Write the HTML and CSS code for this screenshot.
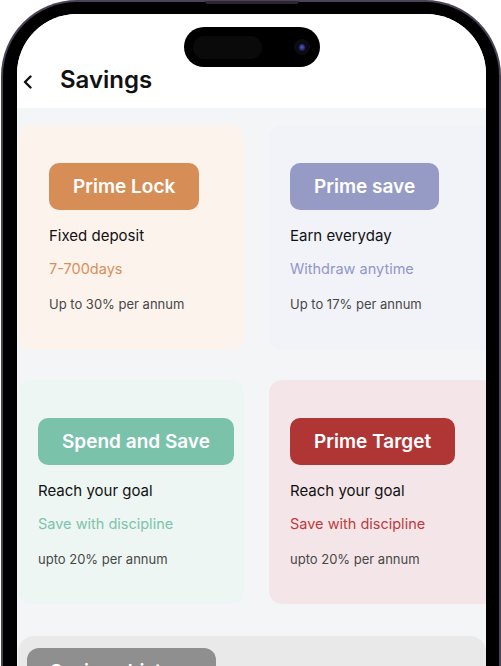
FILE: index.html
```html
<!DOCTYPE html>
<html>
<head>
<meta charset="utf-8">
<link rel="stylesheet" href="styles.css">
</head>
<body>
<div class="phone">
  <div class="speaker"></div>
  <div class="screen">
    <div class="island">
      <div class="island-sensor"></div>
      <div class="island-camera"><div class="lens"></div></div>
    </div>
    <header class="topbar">
      <svg class="back" width="12" height="14" viewBox="0 0 12 14"><path d="M8.5 1.5 L3 7 L8.5 12.5" fill="none" stroke="#111" stroke-width="2.4" stroke-linecap="round" stroke-linejoin="round"/></svg>
      <h1 class="title">Savings</h1>
    </header>
    <main class="content">
      <div class="grid">
        <div class="card card-lock">
          <div class="pill">Prime Lock</div>
          <p class="line main">Fixed deposit</p>
          <p class="line accent">7-700days</p>
          <p class="line rate">Up to 30% per annum</p>
        </div>
        <div class="card card-save">
          <div class="pill">Prime save</div>
          <p class="line main">Earn everyday</p>
          <p class="line accent">Withdraw anytime</p>
          <p class="line rate">Up to 17% per annum</p>
        </div>
        <div class="card card-spend">
          <div class="pill">Spend and Save</div>
          <p class="line main">Reach your goal</p>
          <p class="line accent">Save with discipline</p>
          <p class="line rate">upto 20% per annum</p>
        </div>
        <div class="card card-target">
          <div class="pill">Prime Target</div>
          <p class="line main">Reach your goal</p>
          <p class="line accent">Save with discipline</p>
          <p class="line rate">upto 20% per annum</p>
        </div>
      </div>
      <div class="history">
        <div class="pill history-pill">Savings history</div>
      </div>
    </main>
  </div>
</div>
</body>
</html>
```

FILE: styles.css
```css
* { box-sizing: border-box; }
html, body {
  margin: 0;
  padding: 0;
  background: #fff;
  overflow: hidden;
}
body {
  font-family: Inter, "Noto Sans", sans-serif;
  width: 501px;
  height: 666px;
}
.phone {
  position: relative;
  margin-left: 1px;
  width: 500px;
  height: 760px;
  background: #000;
  border: 2px solid #4a4256;
  border-bottom: none;
  border-radius: 76px 76px 0 0;
  padding: 12px 13px 0 14px;
}
.speaker {
  position: absolute;
  top: -1px;
  left: 202px;
  width: 94px;
  height: 3px;
  border-radius: 0 0 3px 3px;
  background: #2c2733;
}
.screen {
  position: relative;
  height: 100%;
  background: #fff;
  border-radius: 60px 60px 0 0;
  overflow: hidden;
}
.island {
  position: absolute;
  top: 13px;
  left: 167px;
  width: 136px;
  height: 40px;
  border-radius: 20px;
  background: #000;
  display: flex;
  align-items: center;
  justify-content: space-between;
  padding: 0 10px 0 9px;
}
.island-sensor {
  width: 69px;
  height: 23px;
  border-radius: 12px;
  background: #0a0a0b;
}
.island-camera {
  width: 16px;
  height: 16px;
  border-radius: 50%;
  background: #0b0b14;
  display: flex;
  align-items: center;
  justify-content: center;
}
.lens {
  width: 6px;
  height: 7px;
  border-radius: 50%;
  background: radial-gradient(circle at 50% 45%, #5560c0 0, #262b70 55%, #11132c 100%);
}
.topbar {
  height: 94px;
  display: flex;
  align-items: flex-end;
  padding: 0 0 13px 5px;
  background: #fff;
}
.back {
  margin-bottom: 6px;
  margin-right: 26px;
}
.title {
  margin: 0;
  font-size: 24px;
  font-weight: 600;
  color: #111;
  line-height: 30px;
}
.content {
  background: #f4f5f7;
  padding: 17px 0 0 1px;
  min-height: 600px;
}
.grid {
  display: grid;
  grid-template-columns: 226px 226px;
  column-gap: 25px;
  row-gap: 30px;
}
.card {
  border-radius: 13px;
  padding: 38px 0 36px 21px;
  display: flex;
  flex-direction: column;
  align-items: flex-start;
}
.card-lock { padding-left: 31px; background: #fcf3ed; }
.card-save { background: #f2f3f9; }
.card-spend { padding-left: 20px; padding-bottom: 35px; background: #edf6f3; }
.card-target { padding-bottom: 35px; background: #f4e6e8; }
.pill {
  height: 47px;
  padding: 0 24px;
  border-radius: 10px;
  display: flex;
  align-items: center;
  justify-content: center;
  color: #fff;
  font-size: 19px;
  font-weight: 600;
  white-space: nowrap;
}
.card-lock .pill { background: #d78e56; }
.card-save .pill { background: #969bc6; }
.card-spend .pill { background: #7bc2aa; }
.card-target .pill { background: #b03636; }
.line {
  margin: 0;
  line-height: 20px;
  white-space: nowrap;
}
.main {
  margin-top: 16px;
  font-size: 15px;
  font-weight: 400;
  color: #111;
}
.accent {
  margin-top: 13px;
  font-size: 14.5px;
  font-weight: 400;
}
.rate {
  margin-top: 15px;
  font-size: 13px;
  color: #474747;
}
.card-lock .accent { color: #d98f58; }
.card-save .accent { color: #9196c9; }
.card-spend .accent { color: #7cc4ab; }
.card-target .accent { color: #bf3a3d; }
.history {
  margin-top: 32px;
  background: #e9e9e9;
  border-radius: 16px 16px 0 0;
  padding: 12px 0 0 9px;
  height: 200px;
}
.history-pill {
  width: 189px;
  background: #8f8f8f;
  justify-content: flex-start;
  padding-left: 23px;
  border-radius: 12px;
}
```
